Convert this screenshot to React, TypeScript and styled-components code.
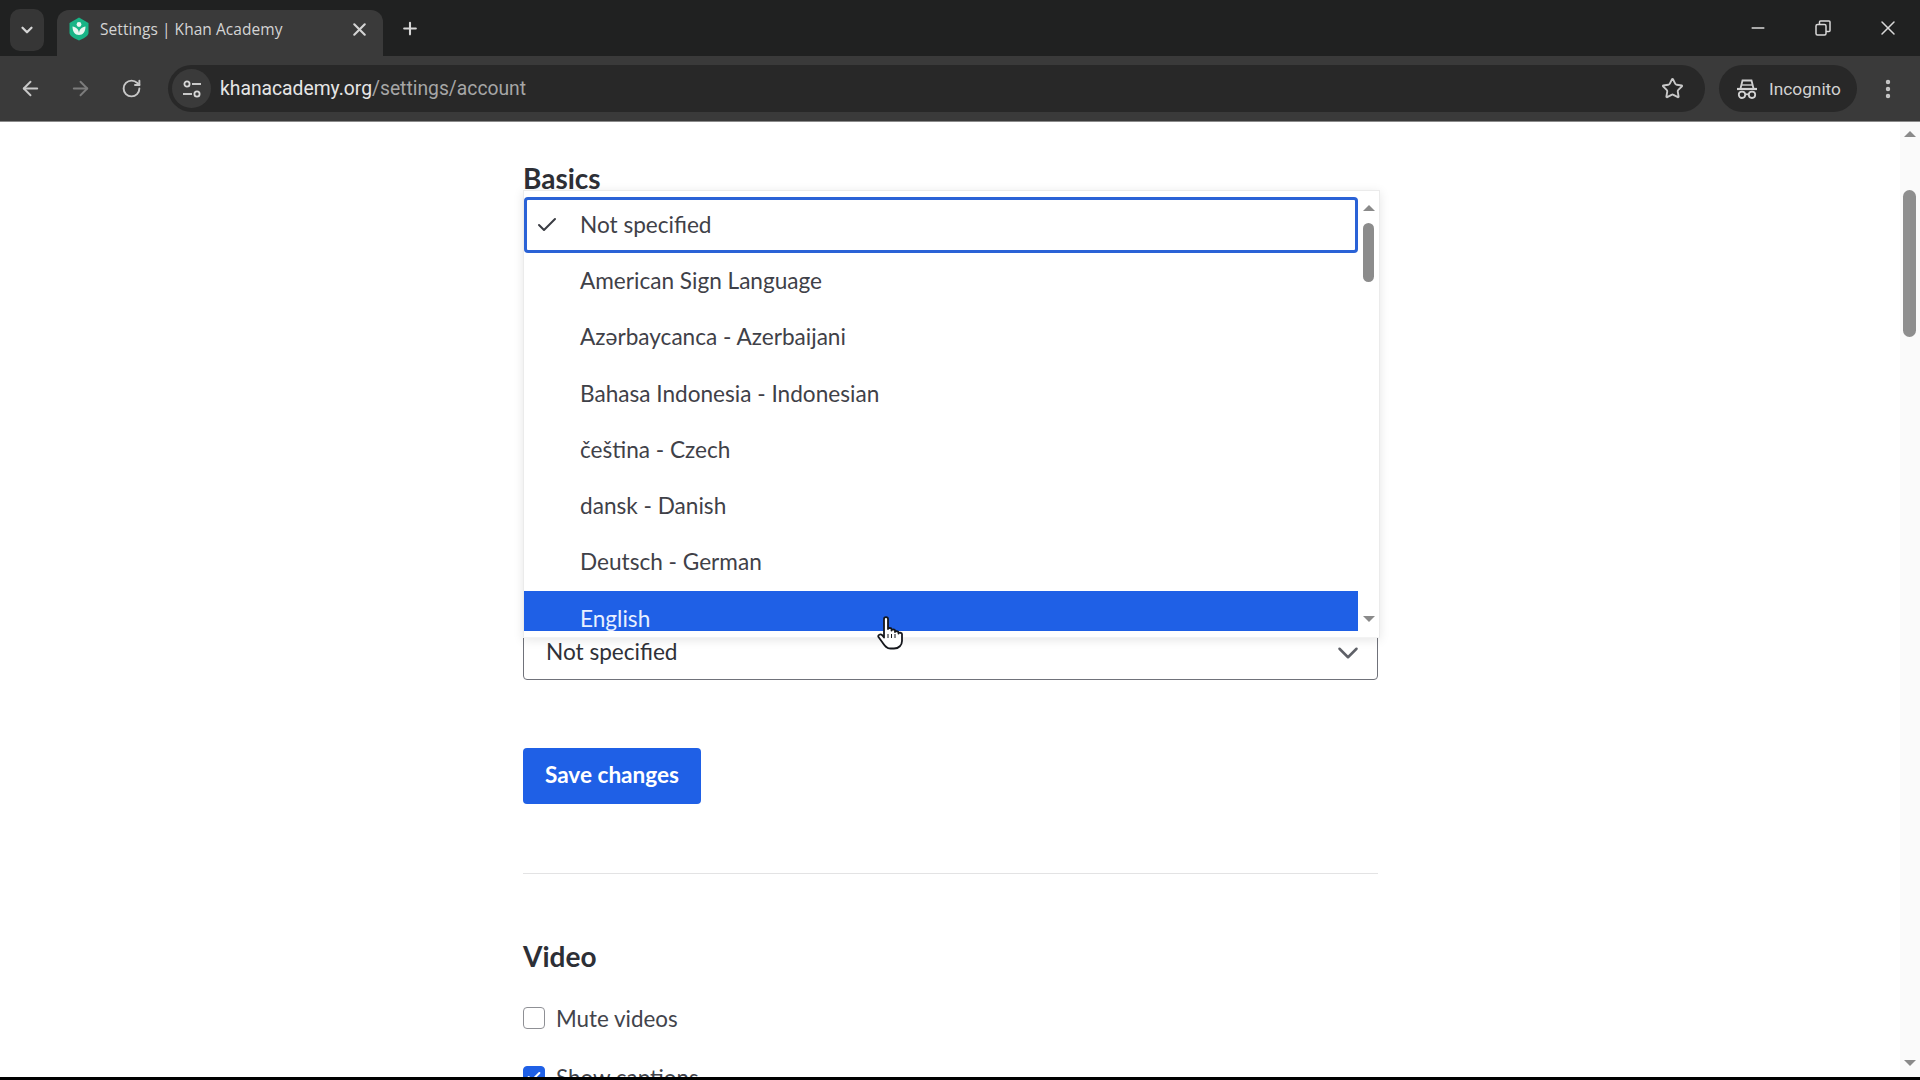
import React from "react";
import styled, { createGlobalStyle } from "styled-components";
import { ArrowLeft, ArrowRight, RotateCw, Star, X, Plus, ChevronDown, Check, Minus, EllipsisVertical } from "lucide-react";

const Global = createGlobalStyle`
  html, body { margin: 0; padding: 0; background: #000; }
  body { width: 1920px; height: 1080px; overflow: hidden; font-family: "Lato", "Liberation Sans", sans-serif; }
  * { box-sizing: border-box; }
`;

const Shell = styled.div`
  width: 1920px;
  height: 1080px;
  display: flex;
  flex-direction: column;
  background: #000;
  overflow: hidden;
`;

const TitleBar = styled.div`
  height: 56px;
  flex: none;
  background: #202121;
  display: flex;
  align-items: flex-end;
  padding-left: 10px;
  color: #d6d6d6;
`;

const TabListButton = styled.div`
  width: 34px;
  height: 42px;
  margin-bottom: 5px;
  border-radius: 10px;
  background: #363636;
  display: flex;
  align-items: center;
  justify-content: center;
`;

const Tab = styled.div`
  width: 326px;
  height: 46px;
  margin-left: 13px;
  padding: 0 13px 8px 11px;
  background: #3a3a3a;
  border-radius: 12px 12px 0 0;
  display: flex;
  align-items: center;
  font-family: "Open Sans", sans-serif;
  font-size: 15.5px;
  letter-spacing: 0.05px;
  color: #d4d4d4;
`;

const Favicon = styled.svg`
  width: 22px;
  height: 24px;
  flex: none;
  margin-right: 10px;
`;

const TabTitle = styled.span`
  flex: 1;
  white-space: nowrap;
`;

const NewTab = styled.div`
  width: 20px;
  height: 20px;
  margin: 0 0 18px 17px;
  display: flex;
  align-items: center;
  justify-content: center;
`;

const WindowControls = styled.div`
  margin-left: auto;
  display: flex;
  align-items: center;
  height: 56px;
  gap: 41px;
  padding-right: 20px;
  color: #d8d8d8;
`;

const WindowButton = styled.div`
  width: 24px;
  height: 24px;
  display: flex;
  align-items: center;
  justify-content: center;
`;

const Toolbar = styled.div`
  height: 66px;
  flex: none;
  background: #3a3a3a;
  border-bottom: 1px solid #8a8a8a;
  display: flex;
  align-items: center;
  padding: 0 18px 0 18px;
  color: #c8c8c8;
`;

const NavButton = styled.div<{ $dim?: boolean; $gap: number }>`
  width: 24px;
  height: 24px;
  margin-right: ${(p) => p.$gap}px;
  display: flex;
  align-items: center;
  justify-content: center;
  color: ${(p) => (p.$dim ? "#7c7c7c" : "#c8c8c8")};
`;

const Omnibox = styled.div`
  width: 1537px;
  height: 47px;
  flex: none;
  background: #282828;
  border-radius: 24px;
  display: flex;
  align-items: center;
  padding-right: 21px;
`;

const SiteChip = styled.div`
  width: 39px;
  height: 39px;
  margin-left: 4px;
  border-radius: 50%;
  background: #3a3a3a;
  display: flex;
  align-items: center;
  justify-content: center;
  flex: none;
`;

const Url = styled.div`
  margin-left: 9px;
  flex: 1;
  font-family: "Roboto", sans-serif;
  font-size: 19.3px;
  color: #a6a6a6;
  white-space: nowrap;
`;

const UrlHost = styled.span`
  color: #e6e6e6;
`;

const IncognitoPill = styled.div`
  width: 138px;
  height: 47px;
  margin-left: 14px;
  flex: none;
  background: #282828;
  border-radius: 24px;
  display: flex;
  align-items: center;
  padding-left: 17px;
  gap: 11px;
  font-family: "Roboto", sans-serif;
  font-size: 17.3px;
  color: #d2d2d2;
`;

const MenuDots = styled.div`
  margin-left: 19px;
  width: 24px;
  display: flex;
  justify-content: center;
  color: #c8c8c8;
`;

const PageArea = styled.div`
  flex: none;
  height: 955px;
  display: flex;
  background: #fff;
  position: relative;
  overflow: hidden;
`;

const Main = styled.main`
  flex: 1;
  padding-left: 523px;
  color: #21242c;
`;

const Column = styled.div`
  width: 855px;
  position: relative;
`;

const SectionTitle = styled.h2<{ $top: number }>`
  margin: ${(p) => p.$top}px 0 0;
  font-size: 28px;
  line-height: 36px;
  font-weight: 700;
  color: #2d2f36;
`;

const SelectBox = styled.div`
  height: 57px;
  margin-top: 427px;
  padding: 0 12px 1px 22px;
  border: 1px solid #70727a;
  border-radius: 4px;
  display: flex;
  align-items: center;
  justify-content: space-between;
  font-size: 22.6px;
  color: #2f3138;
`;

const SelectChevron = styled.span`
  display: flex;
  margin-top: 3px;
  color: #5f6168;
`;

const SaveButton = styled.button`
  display: block;
  width: 178px;
  height: 56px;
  margin-top: 68px;
  padding-bottom: 4px;
  border: 0;
  border-radius: 4px;
  background: #1f60e6;
  color: #fff;
  font: 700 22.6px "Lato", sans-serif;
`;

const Divider = styled.hr`
  border: 0;
  height: 1px;
  margin: 69px 0 0;
  background: #e3e3e4;
`;

const CheckRow = styled.label<{ $top: number }>`
  display: flex;
  align-items: center;
  gap: 11px;
  height: 26px;
  margin-top: ${(p) => p.$top}px;
  font-size: 22.4px;
  color: #42444b;
`;

const CheckBoxMark = styled.span<{ $on?: boolean }>`
  width: 22px;
  height: 22px;
  border-radius: 4px;
  flex: none;
  border: 1.5px solid ${(p) => (p.$on ? "#1f60e6" : "#8f9095")};
  background: ${(p) => (p.$on ? "#1f60e6" : "#fff")};
  color: #fff;
  display: flex;
  align-items: center;
  justify-content: center;
`;

const Popup = styled.div`
  position: absolute;
  left: 0;
  top: 30px;
  width: 857px;
  height: 448px;
  background: #fff;
  border: 1px solid #ebebeb;
  border-bottom-color: #f3f3f3;
  box-shadow: 0 2px 10px rgba(0, 0, 0, 0.1);
  display: flex;
  overflow: hidden;
`;

const OptionList = styled.ul`
  list-style: none;
  margin: 0;
  padding: 6px 0 0;
  flex: 1;
  overflow: hidden;
  height: 440px;
`;

const Option = styled.li<{ $focus?: boolean; $active?: boolean }>`
  height: 56.3px;
  display: flex;
  align-items: center;
  position: relative;
  padding: 0 0 2px 56px;
  font-size: 22.6px;
  white-space: nowrap;
  color: ${(p) => (p.$active ? "#e8f0ff" : "#3f4148")};
  background: ${(p) => (p.$active ? "#1f60e6" : "transparent")};
  border-radius: ${(p) => (p.$focus ? "4px" : "0")};
  box-shadow: ${(p) => (p.$focus ? "inset 0 0 0 3px #2a62d6" : "none")};
`;

const OptionCheck = styled.span`
  position: absolute;
  left: 11px;
  top: 16px;
  width: 24px;
  height: 24px;
  display: flex;
  color: #3a3c43;
`;

const MiniScroll = styled.div`
  width: 21px;
  flex: none;
  background: #fff;
  position: relative;
`;

const Arrow = styled.span<{ $down?: boolean; $inset: number }>`
  position: absolute;
  left: 50%;
  margin-left: -6px;
  ${(p) => (p.$down ? `bottom: ${p.$inset}px;` : `top: ${p.$inset}px;`)}
  width: 0;
  height: 0;
  border-left: 6px solid transparent;
  border-right: 6px solid transparent;
  ${(p) => (p.$down ? "border-top: 6px solid #8a8a8a;" : "border-bottom: 6px solid #8a8a8a;")}
`;

const MiniThumb = styled.div`
  position: absolute;
  top: 32px;
  left: 5px;
  width: 11px;
  height: 59px;
  border-radius: 6px;
  background: #8c8c8c;
`;

const PageScroll = styled.div`
  width: 20px;
  flex: none;
  background: #fafafa;
  position: relative;
`;

const PageThumb = styled.div`
  position: absolute;
  top: 68px;
  left: 3px;
  width: 13px;
  height: 147px;
  border-radius: 7px;
  background: #8e8e8e;
`;

const Cursor = styled.svg`
  position: absolute;
  left: 877px;
  top: 494px;
  width: 28px;
  height: 34px;
`;

const options = [
  "Not specified",
  "American Sign Language",
  "Azərbaycanca - Azerbaijani",
  "Bahasa Indonesia - Indonesian",
  "čeština - Czech",
  "dansk - Danish",
  "Deutsch - German",
  "English",
];

export default function App() {
  return (
    <Shell>
      <Global />
      <TitleBar>
        <TabListButton>
          <ChevronDown size={18} strokeWidth={3} />
        </TabListButton>
        <Tab>
          <Favicon viewBox="0 0 22 24">
            <path d="M11 0.5 L20.5 6 V16 C20.5 19 15 22 11 23.5 C7 22 1.5 19 1.5 16 V6 Z" fill="#18b486" />
            <path d="M4.5 9.5 C8 10 10.5 12 11 16 C11.5 12 14 10 17.5 9.5 C17.5 14.5 15 18 11 18 C7 18 4.5 14.5 4.5 9.5 Z" fill="#e8f7f1" />
            <circle cx="11" cy="7.5" r="2.4" fill="#e8f7f1" />
          </Favicon>
          <TabTitle>Settings | Khan Academy</TabTitle>
          <X size={21} strokeWidth={2.4} />
        </Tab>
        <NewTab>
          <Plus size={21} strokeWidth={2.5} />
        </NewTab>
        <WindowControls>
          <WindowButton>
            <Minus size={20} strokeWidth={1.8} />
          </WindowButton>
          <WindowButton>
            <svg width="16" height="16" viewBox="0 0 16 16" fill="none" stroke="currentColor" strokeWidth="1.5">
              <rect x="1" y="4.5" width="10" height="10.5" rx="1.5" />
              <path d="M4.5 4.5 V2 A1 1 0 0 1 5.5 1 H14 A1 1 0 0 1 15 2 V10.5 A1 1 0 0 1 14 11.5 H11" />
            </svg>
          </WindowButton>
          <WindowButton>
            <X size={30} strokeWidth={1.5} />
          </WindowButton>
        </WindowControls>
      </TitleBar>
      <Toolbar>
        <NavButton $gap={26}>
          <ArrowLeft size={23} strokeWidth={2} />
        </NavButton>
        <NavButton $dim $gap={27}>
          <ArrowRight size={23} strokeWidth={2} />
        </NavButton>
        <NavButton $gap={25}>
          <RotateCw size={21} strokeWidth={2.2} />
        </NavButton>
        <Omnibox>
          <SiteChip>
            <svg width="20" height="20" viewBox="0 0 20 20" fill="none" stroke="#d8d8d8" strokeWidth="1.8">
              <circle cx="5" cy="5" r="2.6" />
              <path d="M10 5 H19" />
              <path d="M1 15 H10" />
              <circle cx="15" cy="15" r="2.6" />
            </svg>
          </SiteChip>
          <Url>
            <UrlHost>khanacademy.org</UrlHost>/settings/account
          </Url>
          <Star size={23} strokeWidth={2} color="#c8c8c8" />
        </Omnibox>
        <IncognitoPill>
          <svg width="22" height="22" viewBox="0 0 22 22" fill="none" stroke="#d2d2d2" strokeWidth="1.8">
            <path d="M1 11 H21" strokeWidth="2.2" />
            <path d="M4.5 10.5 L6.5 2.5 H15.5 L17.5 10.5" />
            <path d="M5.5 7 H16.5" strokeWidth="1.4" />
            <circle cx="6" cy="16.8" r="3.2" />
            <circle cx="16" cy="16.8" r="3.2" />
            <path d="M9.2 16.3 H12.8" />
          </svg>
          Incognito
        </IncognitoPill>
        <MenuDots>
          <EllipsisVertical size={24} strokeWidth={2.4} />
        </MenuDots>
      </Toolbar>
      <PageArea>
        <Main>
          <Column>
            <SectionTitle $top={38}>Basics</SectionTitle>
            <SelectBox>
              Not specified
              <SelectChevron>
                <ChevronDown size={34} strokeWidth={1.8} />
              </SelectChevron>
            </SelectBox>
            <SaveButton>Save changes</SaveButton>
            <Divider />
            <SectionTitle $top={64}>Video</SectionTitle>
            <CheckRow $top={31}>
              <CheckBoxMark />
              Mute videos
            </CheckRow>
            <CheckRow $top={33}>
              <CheckBoxMark $on>
                <Check size={16} strokeWidth={3} />
              </CheckBoxMark>
              Show captions
            </CheckRow>
            <Popup>
              <OptionList>
                {options.map((o, i) => (
                  <Option key={o} $focus={i === 0} $active={i === 7}>
                    {i === 0 && (
                      <OptionCheck>
                        <Check size={24} strokeWidth={2} />
                      </OptionCheck>
                    )}
                    {o}
                  </Option>
                ))}
              </OptionList>
              <MiniScroll>
                <Arrow $inset={14} />
                <MiniThumb />
                <Arrow $down $inset={15} />
              </MiniScroll>
            </Popup>
          </Column>
        </Main>
        <PageScroll>
          <Arrow $inset={9} />
          <PageThumb />
          <Arrow $down $inset={11} />
        </PageScroll>
        <Cursor viewBox="0 0 28 34">
          <path
            d="M7 3 C7 0.6 11 0.6 11 3 V13 C11 11.5 14.5 11.5 14.5 13 V14.5 C14.5 13 18 13 18 14.5 V16 C18 14.8 21.5 14.8 21.5 16.5 V17.5 C21.5 16.3 25 16.3 25 18 V25 C25 29 22 32.5 17 32.5 H13.5 C9.5 32.5 8 30 5.5 26.5 L1.5 21 C0.5 19 3.5 17.5 5 19 L7 21.5 Z"
            fill="#fff"
            stroke="#15171c"
            strokeWidth="1.8"
            strokeLinejoin="round"
          />
          <path d="M11 18 V22 M14.5 18 V22 M18 18 V22" stroke="#15171c" strokeWidth="1" />
        </Cursor>
      </PageArea>
    </Shell>
  );
}
